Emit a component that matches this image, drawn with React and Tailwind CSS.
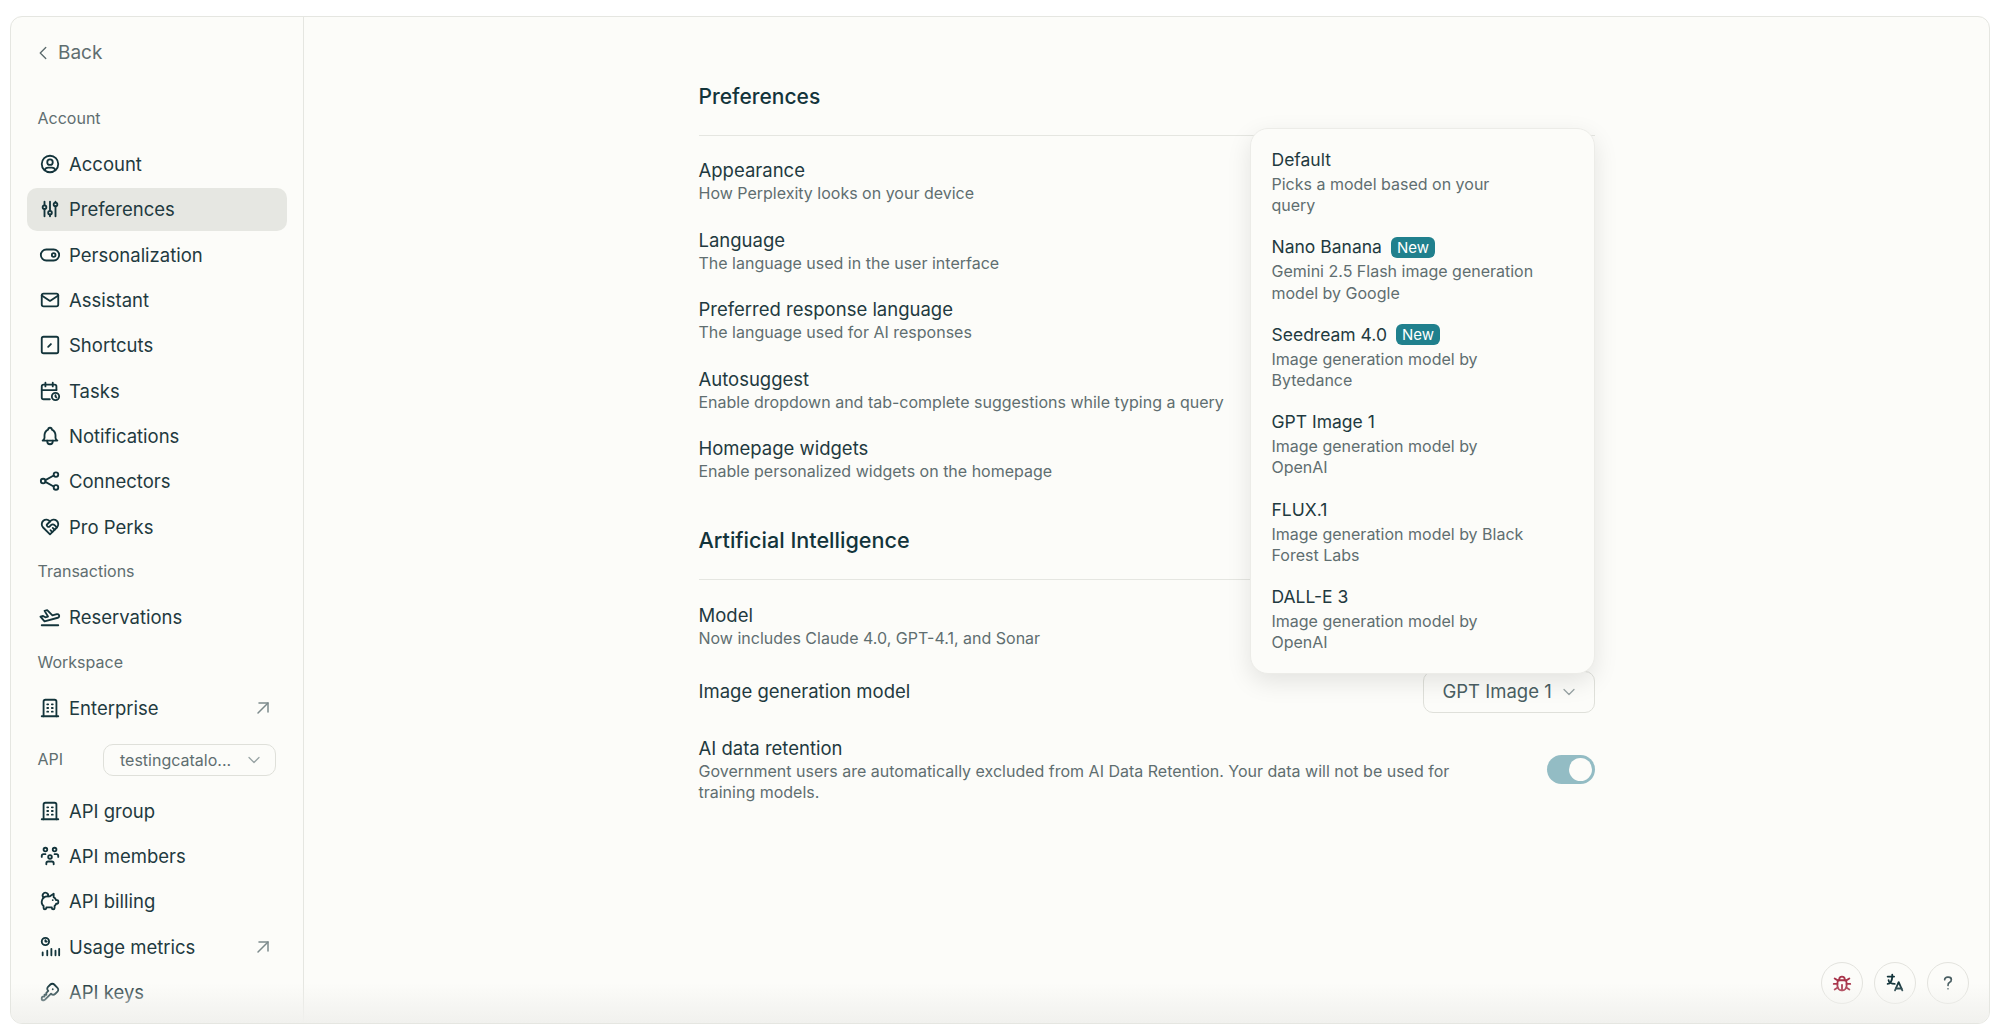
import React from "react";
import { TbUserCircle, TbAdjustments, TbToggleRight, TbMail, TbCalendarTime, TbBell, TbHeartHandshake, TbPlaneDeparture, TbBuilding, TbUsersGroup, TbPigMoney, TbKey, TbBug, TbLanguage, TbQuestionMark, TbArrowUpRight, TbChevronDown, TbChevronLeft } from "react-icons/tb";

const Shortcut = (p) => (
  <svg viewBox="0 0 24 24" fill="none" stroke="currentColor" strokeWidth="2" strokeLinecap="round" strokeLinejoin="round" {...p}>
    <rect x="3" y="3" width="18" height="18" rx="2" />
    <path d="M10 14l3 -3" />
  </svg>
);
const Connect = (p) => (
  <svg viewBox="0 0 24 24" fill="none" stroke="currentColor" strokeWidth="2" strokeLinecap="round" strokeLinejoin="round" {...p}>
    <circle cx="4.5" cy="12" r="2.5" />
    <circle cx="18.5" cy="5" r="2.5" />
    <circle cx="18.5" cy="19" r="2.5" />
    <path d="M7 11l9 -5M7 13l9 5" />
  </svg>
);
const Usage = (p) => (
  <svg viewBox="0 0 24 24" fill="none" stroke="currentColor" strokeWidth="2" strokeLinecap="round" strokeLinejoin="round" {...p}>
    <circle cx="7" cy="6" r="4" />
    <path d="M7 4.5v1.5h1.5M9 21v-5M13.5 21v-7M18 21v-5M22 21v-7M4 21v-3" />
  </svg>
);

const Row = ({ icon: I, label, active, ext }) => (
  <div className="flex h-[45.33px] shrink-0 items-center">
    <div className={`flex h-[43px] w-full items-center rounded-[10px] pl-[12px] pr-[12px] ${active ? "bg-[#e6e7e2]" : ""}`}>
      <I className="h-[22px] w-[22px] shrink-0 text-[#13343b]" />
      <span className="ml-[8px] text-[18.5px] leading-[24px] text-[#1f3a40]">{label}</span>
      {ext && <TbArrowUpRight strokeWidth={1.5} className="ml-auto h-[24px] w-[24px] text-[#7c8a8c]" />}
    </div>
  </div>
);

const Label = ({ children, className }) => (
  <div className={`pl-[10.5px] text-[16px] leading-[20px] text-[#5f6e70] ${className}`}>{children}</div>
);

const Setting = ({ title, sub, className }) => (
  <div className={`flex flex-col ${className}`}>
    <div className="text-[18.5px] leading-[24px] text-[#1f3a40]">{title}</div>
    {sub && <div className="mt-[1px] text-[16px] leading-[21px] text-[#5f6e70]">{sub}</div>}
  </div>
);

const Opt = ({ title, sub, isNew }) => (
  <div className="flex h-[87.4px] flex-col pt-[2px]">
    <div className="flex h-[24px] items-center text-[17.5px] leading-[24px] text-[#1f3a40]">
      {title}
      {isNew && <span className="ml-[9px] rounded-[6px] bg-[#20808d] px-[6px] text-[15px] leading-[21px] text-white">New</span>}
    </div>
    <div className="mt-[2px] w-[265px] text-[16px] leading-[21.3px] text-[#5f6e70]">{sub}</div>
  </div>
);

const Round = ({ children }) => (
  <div className="flex h-[42px] w-[42px] items-center justify-center rounded-full border border-[#e3e3de] bg-[#fcfcf9]">{children}</div>
);

export default function App() {
  return (
    <div className="h-[1029px] w-[2000px] bg-white pb-[5px] pl-[10px] pr-[10px] pt-[16px]" style={{ fontFamily: "Inter, 'Liberation Sans', sans-serif" }}>
      <div className="relative flex h-full overflow-hidden rounded-[12px] border border-[#e5e6e1] bg-[#fcfcf9]">
        <aside className="flex w-[293px] shrink-0 flex-col border-r border-[#e5e6e1] pl-[16px] pr-[16px] pt-[24px]">
          <div className="flex h-[24px] items-center pl-[5px] text-[19px] text-[#5f6e70]">
            <TbChevronLeft strokeWidth={1.5} className="h-[22px] w-[22px]" />
            <span className="ml-[4px]">Back</span>
          </div>
          <Label className="mt-[42.5px]">Account</Label>
          <div className="mt-[14px]" />
          <Row icon={TbUserCircle} label="Account" />
          <Row icon={TbAdjustments} label="Preferences" active />
          <Row icon={TbToggleRight} label="Personalization" />
          <Row icon={TbMail} label="Assistant" />
          <Row icon={Shortcut} label="Shortcuts" />
          <Row icon={TbCalendarTime} label="Tasks" />
          <Row icon={TbBell} label="Notifications" />
          <Row icon={Connect} label="Connectors" />
          <Row icon={TbHeartHandshake} label="Pro Perks" />
          <Label className="mt-[11.5px]">Transactions</Label>
          <div className="mt-[13.5px]" />
          <Row icon={TbPlaneDeparture} label="Reservations" />
          <Label className="mt-[12px]">Workspace</Label>
          <div className="mt-[14px]" />
          <Row icon={TbBuilding} label="Enterprise" ext />
          <div className="mt-[13px] flex h-[32px] items-center justify-between pl-[10.5px] pr-[11px]">
            <span className="mb-[2px] text-[16px] text-[#5f6e70]">API</span>
            <div className="flex h-[32px] w-[173px] items-center rounded-[10px] border border-[#dfe0da] pl-[16px] pr-[11px] text-[16px] text-[#5f6e70]">
              <span>testingcatalo...</span>
              <TbChevronDown strokeWidth={1.5} className="ml-auto h-[20px] w-[20px] text-[#98a3a4]" />
            </div>
          </div>
          <div className="mt-[12px]" />
          <Row icon={TbBuilding} label="API group" />
          <Row icon={TbUsersGroup} label="API members" />
          <Row icon={TbPigMoney} label="API billing" />
          <Row icon={Usage} label="Usage metrics" ext />
          <Row icon={TbKey} label="API keys" />
        </aside>

        <main className="relative flex-1">
          <div className="relative mx-auto w-[896px] pt-[66px]">
            <div className="text-[21px] font-medium leading-[28px] text-[#13343b]">Preferences</div>
            <div className="mt-[24px] h-px bg-[#e5e6e1]" />
            <div className="mt-[22px] flex flex-col gap-[23.5px]">
              <Setting title="Appearance" sub="How Perplexity looks on your device" />
              <Setting title="Language" sub="The language used in the user interface" />
              <Setting title="Preferred response language" sub="The language used for AI responses" />
              <Setting title="Autosuggest" sub="Enable dropdown and tab-complete suggestions while typing a query" />
              <Setting title="Homepage widgets" sub="Enable personalized widgets on the homepage" />
            </div>
            <div className="mt-[43px] text-[21.6px] font-medium leading-[30px] text-[#13343b]">Artificial Intelligence</div>
            <div className="mt-[24px] h-px bg-[#e5e6e1]" />
            <Setting className="mt-[23px]" title="Model" sub="Now includes Claude 4.0, GPT-4.1, and Sonar" />
            <div className="mt-[21.5px] flex h-[42px] items-center justify-between">
              <div className="text-[18.5px] text-[#1f3a40]">Image generation model</div>
              <div className="flex h-[42px] w-[172px] items-center rounded-[10px] border border-[#dfe0da] pl-[19px] text-[18.5px] text-[#4a5f63]">
                GPT Image 1
                <TbChevronDown strokeWidth={1.5} className="ml-[7px] h-[20px] w-[20px] text-[#98a3a4]" />
              </div>
            </div>
            <div className="mt-[23px] flex items-center justify-between">
              <div className="w-[770px]">
                <div className="text-[18.5px] leading-[24px] text-[#1f3a40]">AI data retention</div>
                <div className="mt-[1px] text-[16px] leading-[21.3px] text-[#5f6e70]">Government users are automatically excluded from AI Data Retention. Your data will not be used for training models.</div>
              </div>
              <div className="flex h-[29px] w-[48px] items-center justify-end rounded-full bg-[#93bcc4] pr-[3px]">
                <div className="h-[23px] w-[23px] rounded-full bg-[#fcfcf9]" />
              </div>
            </div>

            <div className="absolute left-[551px] top-[111px] h-[546px] w-[345px] rounded-[18px] border border-[#ecece8] bg-[#fcfcf9] pl-[21px] pt-[17px] shadow-[0_8px_24px_rgba(0,0,0,0.1)]">
              <Opt title="Default" sub="Picks a model based on your query" />
              <Opt title="Nano Banana" sub="Gemini 2.5 Flash image generation model by Google" isNew />
              <Opt title="Seedream 4.0" sub="Image generation model by Bytedance" isNew />
              <Opt title="GPT Image 1" sub="Image generation model by OpenAI" />
              <Opt title="FLUX.1" sub="Image generation model by Black Forest Labs" />
              <Opt title="DALL-E 3" sub="Image generation model by OpenAI" />
            </div>
          </div>
          <div className="absolute bottom-[19px] right-[20px] flex gap-[11px]">
            <Round><TbBug className="h-[22px] w-[22px] text-[#a8344a]" /></Round>
            <Round><TbLanguage className="h-[22px] w-[22px] text-[#13343b]" /></Round>
            <Round><TbQuestionMark className="h-[20px] w-[20px] text-[#4a5f63]" /></Round>
          </div>
        </main>
        <div className="pointer-events-none absolute bottom-0 left-0 h-[40px] w-full bg-gradient-to-t from-[#f1f1ee] to-transparent" />
      </div>
    </div>
  );
}
